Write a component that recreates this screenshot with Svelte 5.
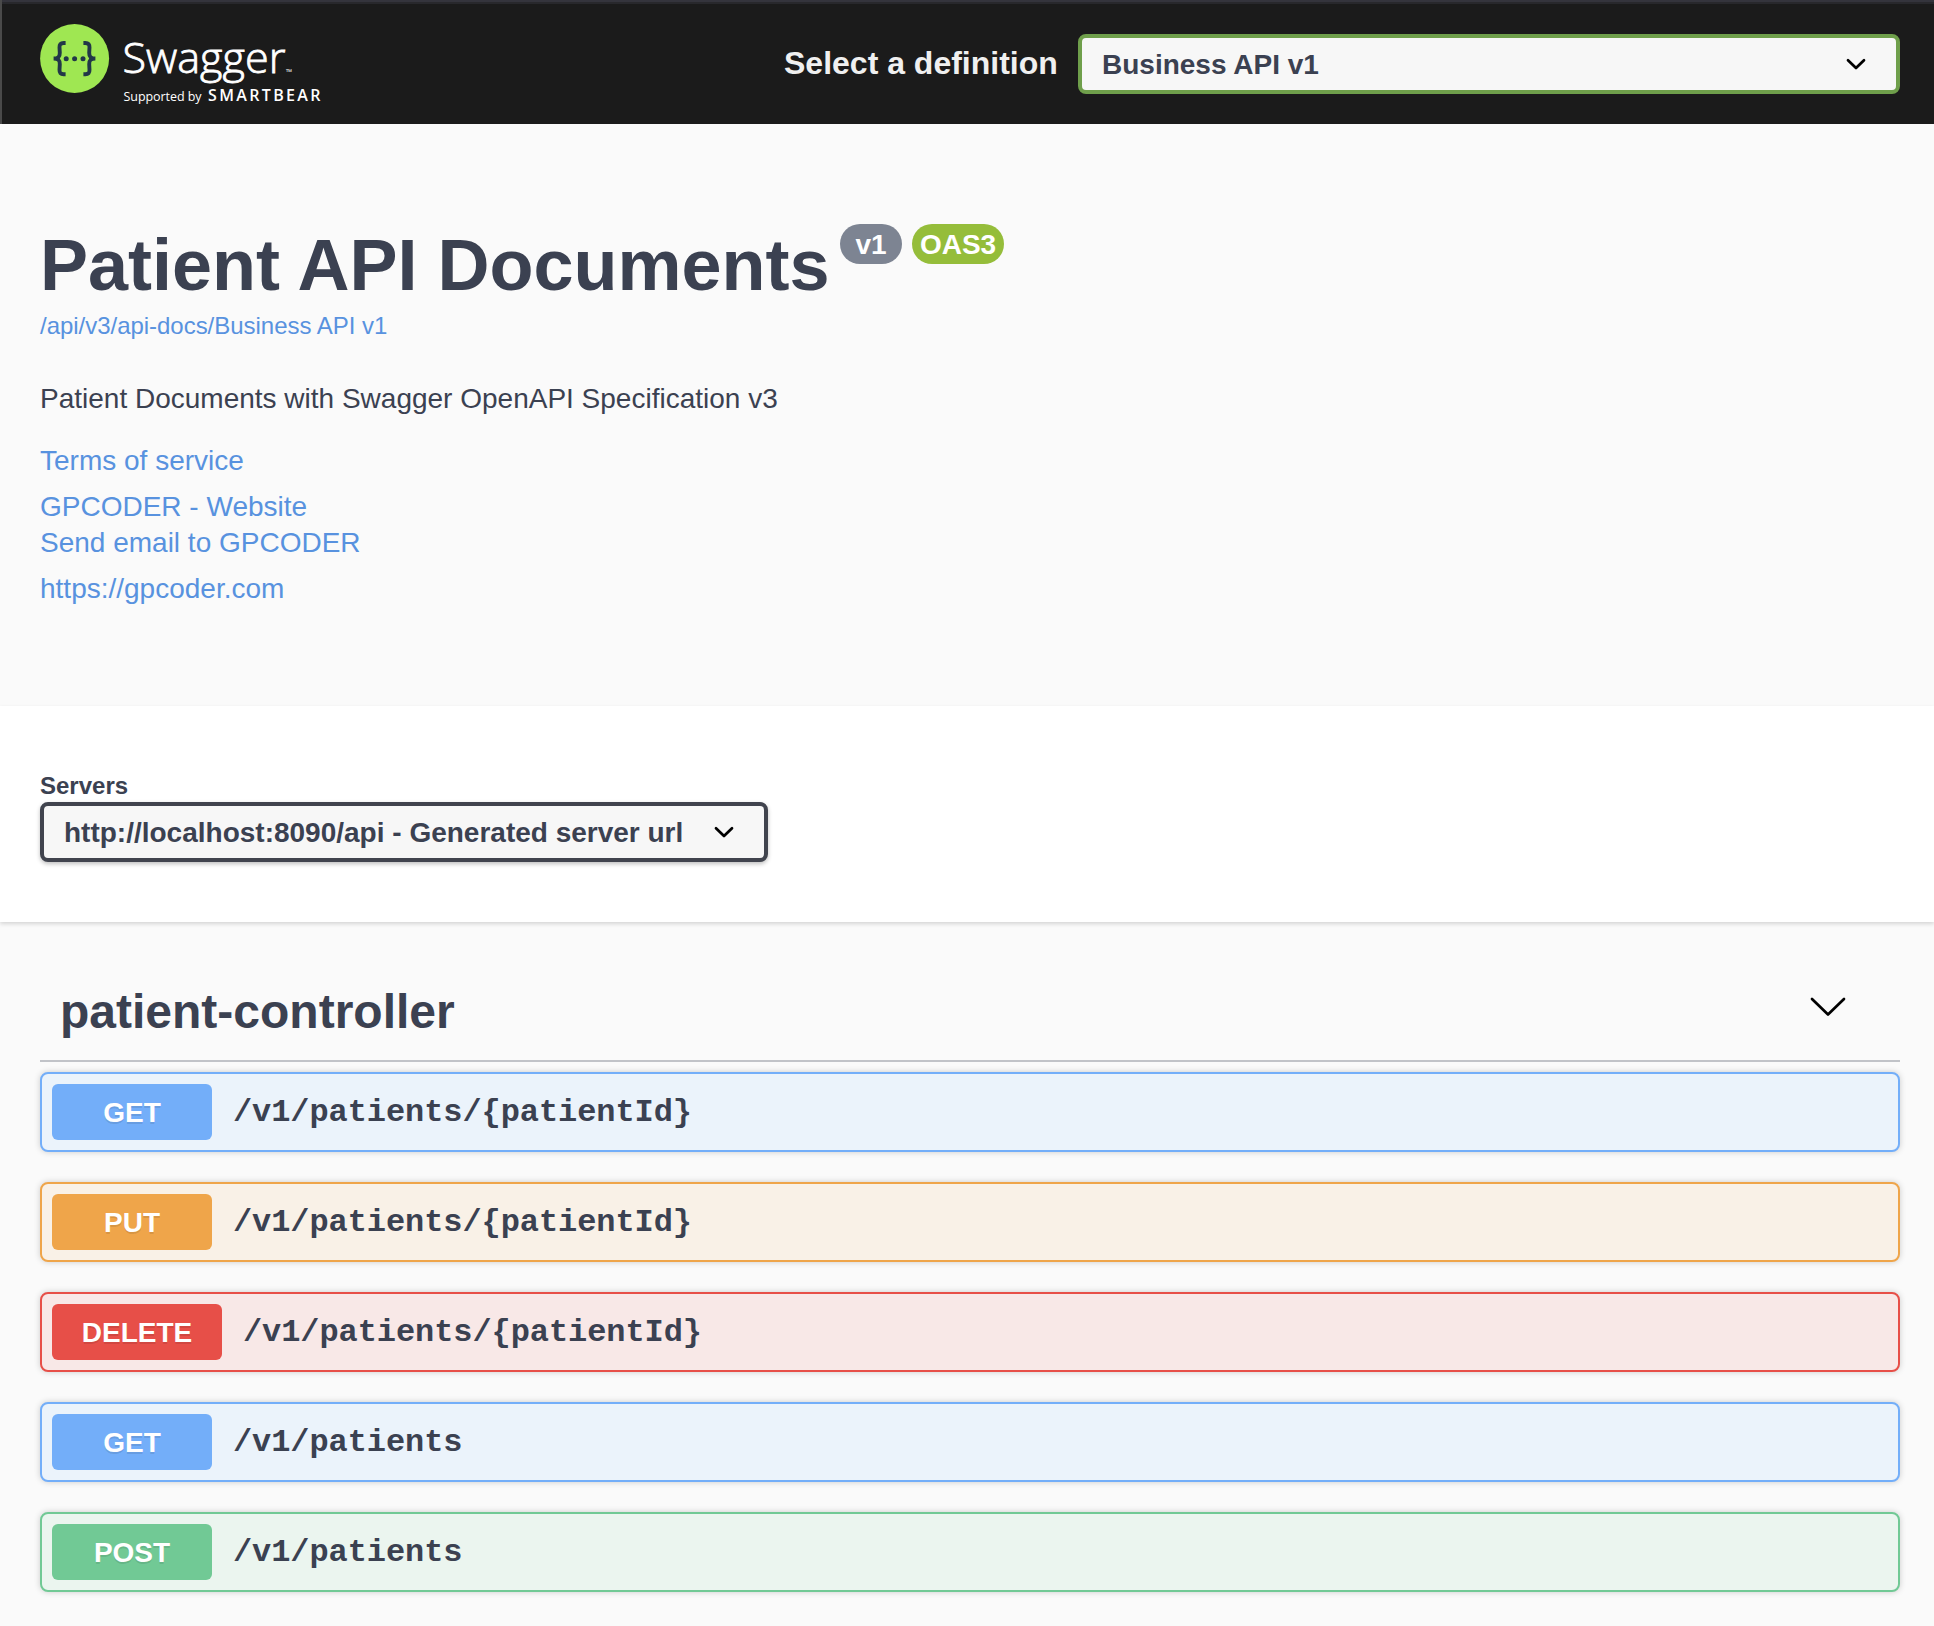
<script>
  const contacts = ['GPCODER - Website', 'Send email to GPCODER'];
  const operations = [
    { method: 'GET', path: '/v1/patients/{patientId}' },
    { method: 'PUT', path: '/v1/patients/{patientId}' },
    { method: 'DELETE', path: '/v1/patients/{patientId}' },
    { method: 'GET', path: '/v1/patients' },
    { method: 'POST', path: '/v1/patients' }
  ];
</script>

{#snippet selectArrow()}
  <svg class="arrow" width="20" height="13" viewBox="0 0 20 13">
    <path d="M2 2.2 L10 10 L18 2.2" fill="none" stroke="#000" stroke-width="2.7" stroke-linecap="round" stroke-linejoin="round" />
  </svg>
{/snippet}

<div class="page">
  <header class="topbar">
    <svg class="logo" width="290" height="90" viewBox="0 0 290 90">
      <circle cx="34.6" cy="38.5" r="34.5" fill="#9fe752" />
      <g fill="none" stroke="#223748" stroke-width="3.9">
        <path d="M25.6 23 H23.6 C20.6 23 19.4 24.4 19.5 27.4 L19.8 32.8 C19.9 36.6 18.2 38.5 13.6 38.5 C18.2 38.5 19.9 40.4 19.8 44.2 L19.5 49.8 C19.4 52.8 20.6 54.2 23.6 54.2 H25.6" />
        <path d="M43.4 23 H45.4 C48.4 23 49.6 24.4 49.5 27.4 L49.2 32.8 C49.1 36.6 50.8 38.5 55.4 38.5 C50.8 38.5 49.1 40.4 49.2 44.2 L49.5 49.8 C49.6 52.8 48.4 54.2 45.4 54.2 H43.4" />
      </g>
      <g fill="#223748">
        <circle cx="26.2" cy="38.8" r="2.5" />
        <circle cx="34.6" cy="38.8" r="2.5" />
        <circle cx="43" cy="38.8" r="2.5" />
      </g>
      <g fill="#fff" font-family="Open Sans, sans-serif">
        <text x="82.5" y="52.5" font-size="43" font-weight="300" stroke="#fff" stroke-width="0.8" textLength="163" lengthAdjust="spacingAndGlyphs">Swagger</text>
        <text x="246" y="54.5" font-size="8">™</text>
        <text x="83.5" y="80.5" font-size="12.5" textLength="78" lengthAdjust="spacing">Supported by</text>
        <text x="168" y="80.5" font-size="16" font-weight="600" textLength="112.5" lengthAdjust="spacing">SMARTBEAR</text>
      </g>
    </svg>
    <div class="definition">
      <span class="definition-label">Select a definition</span>
      <div class="select green">
        <span>Business API v1</span>
        {@render selectArrow()}
      </div>
    </div>
  </header>

  <section class="info">
    <div class="title-row">
      <h1>Patient API Documents</h1>
      <span class="badge version">v1</span>
      <span class="badge oas">OAS3</span>
    </div>
    <a class="spec" href="#spec">/api/v3/api-docs/Business API v1</a>
    <p>Patient Documents with Swagger OpenAPI Specification v3</p>
    <a class="link" href="#terms">Terms of service</a>
    <div class="contacts">
      {#each contacts as contact}
        <a class="link" href="#contact">{contact}</a>
      {/each}
    </div>
    <a class="link" href="#site">https://gpcoder.com</a>
  </section>

  <section class="servers">
    <span class="servers-label">Servers</span>
    <div class="select dark">
      <span>http://localhost:8090/api - Generated server url</span>
      {@render selectArrow()}
    </div>
  </section>

  <section class="tag">
    <div class="tag-head">
      <h2>patient-controller</h2>
      <svg width="38" height="22" viewBox="0 0 38 22">
        <path d="M3 3 L19 18.5 L35 3" fill="none" stroke="#000" stroke-width="2.7" stroke-linecap="round" stroke-linejoin="round" />
      </svg>
    </div>
    <div class="operations">
      {#each operations as op}
        <div class="op {op.method.toLowerCase()}">
          <span class="method">{op.method}</span>
          <span class="path">{op.path}</span>
        </div>
      {/each}
    </div>
  </section>
</div>

<style>
  :global(body) {
    background: #fafafa;
  }
  .page {
    box-sizing: border-box;
    width: 1934px;
    height: 1626px;
    overflow: hidden;
    background: #fafafa;
    color: #3b4151;
    font-family: 'Liberation Sans', Arial, sans-serif;
  }
  .topbar {
    box-sizing: border-box;
    display: flex;
    align-items: flex-start;
    justify-content: space-between;
    height: 124px;
    padding: 20px 34px 0 38px;
    border-left: 2px solid #4a4a4a;
    background: #1b1b1b;
    box-shadow: inset 0 2px #34343c, inset 0 4px #28282c;
  }
  .definition {
    display: flex;
    align-items: flex-start;
    padding-top: 14px;
  }
  .definition-label {
    width: 294px;
    color: #f0f0f0;
    font-size: 32px;
    font-weight: 700;
    line-height: 58px;
    white-space: nowrap;
  }
  .select {
    box-sizing: border-box;
    display: flex;
    align-items: center;
    justify-content: space-between;
    height: 60px;
    padding: 0 30px 0 20px;
    border: 4px solid #41444e;
    border-radius: 8px;
    background: #f7f7f7;
    font-size: 28px;
    font-weight: 700;
    line-height: 50px;
    white-space: nowrap;
  }
  .select span {
    padding-top: 2px;
  }
  .select.green {
    width: 822px;
    border-color: #6f9f4b;
  }
  .select.dark {
    width: 728px;
    margin-top: 1px;
    box-shadow: 0 2px 4px rgba(0, 0, 0, 0.25);
  }
  .info {
    display: flex;
    flex-direction: column;
    align-items: flex-start;
    padding: 99px 40px 99px;
  }
  .title-row {
    display: flex;
    align-items: flex-start;
    height: 84px;
    white-space: nowrap;
  }
  h1 {
    width: 800px;
    margin: 0;
    font-size: 72px;
    line-height: 84px;
  }
  .badge {
    box-sizing: border-box;
    height: 40px;
    margin-top: 1px;
    padding-top: 1px;
    border-radius: 20px;
    color: #fff;
    font-size: 28px;
    font-weight: 700;
    line-height: 40px;
    text-align: center;
  }
  .version {
    width: 62px;
    background: #7d8492;
  }
  .oas {
    width: 92px;
    margin-left: 10px;
    background: #95bd3a;
  }
  a {
    color: #5892df;
    text-decoration: none;
  }
  .spec {
    margin-top: 4px;
    font-size: 24px;
    letter-spacing: -0.03px;
    line-height: 30px;
  }
  p {
    margin: 40px 0 26px;
    font-size: 28px;
    line-height: 36px;
  }
  .link {
    font-size: 28px;
    line-height: 36px;
  }
  .contacts {
    display: flex;
    flex-direction: column;
    margin: 10px 0;
  }
  .servers {
    box-sizing: border-box;
    height: 216px;
    padding: 65px 40px 60px;
    background: #fff;
    box-shadow: 0 2px 4px rgba(0, 0, 0, 0.15);
  }
  .servers-label {
    display: block;
    font-size: 24px;
    font-weight: 700;
    line-height: 30px;
  }
  .tag {
    padding: 62px 34px 0 40px;
  }
  .tag-head {
    display: flex;
    align-items: flex-start;
    justify-content: space-between;
    padding: 0 53px 20px 20px;
    border-bottom: 2px solid #c1c3c8;
  }
  .tag-head svg {
    margin-top: 12px;
  }
  h2 {
    margin: 0;
    font-size: 48px;
    line-height: 56px;
  }
  .operations {
    display: flex;
    flex-direction: column;
    gap: 30px;
    padding-top: 10px;
  }
  .op {
    box-sizing: border-box;
    display: flex;
    align-items: center;
    height: 80px;
    padding: 0 10px;
    border: 2px solid var(--accent);
    border-radius: 8px;
    background: var(--tint);
    box-shadow: 0 0 6px rgba(0, 0, 0, 0.19);
  }
  .method {
    box-sizing: border-box;
    width: 160px;
    height: 56px;
    padding-top: 1px;
    border-radius: 6px;
    background: var(--accent);
    color: #fff;
    font-size: 28px;
    font-weight: 700;
    line-height: 55px;
    text-align: center;
    text-shadow: 0 2px 0 rgba(0, 0, 0, 0.1);
  }
  .delete .method {
    width: 170px;
  }
  .path {
    padding: 2px 0 0 21px;
    font-family: 'Liberation Mono', monospace;
    font-size: 32px;
    font-weight: 700;
    letter-spacing: -0.08px;
    line-height: 56px;
    white-space: nowrap;
  }
  .get {
    --accent: #73aef9;
    --tint: #ebf3fb;
  }
  .put {
    --accent: #efa54a;
    --tint: #f9f1e7;
  }
  .delete {
    --accent: #e74f48;
    --tint: #f8e8e7;
  }
  .post {
    --accent: #71c995;
    --tint: #ebf5ef;
  }
</style>
